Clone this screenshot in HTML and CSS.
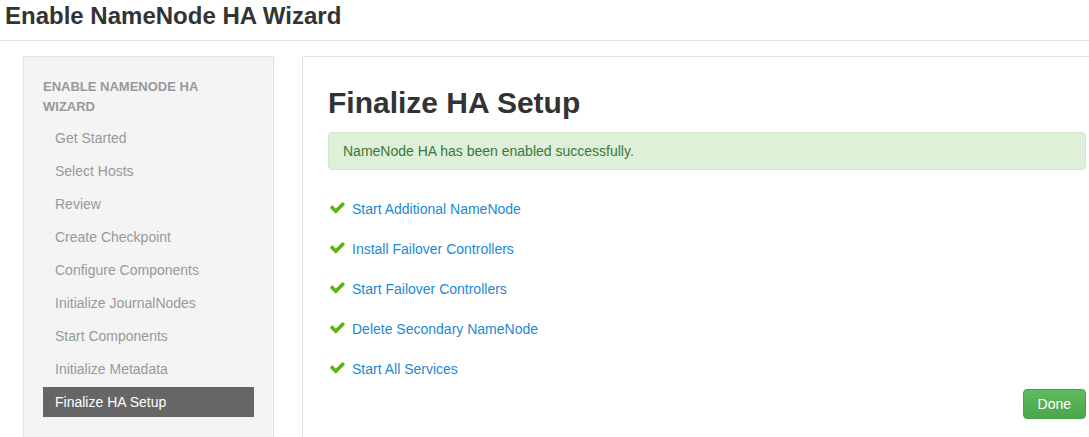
FILE: index.html
```html
<!DOCTYPE html>
<html>
<head>
<meta charset="utf-8">
<link rel="stylesheet" href="styles.css">
</head>
<body>
<header class="page-header">
  <h1 class="page-title">Enable NameNode HA Wizard</h1>
</header>
<div class="wizard">
  <aside class="well">
    <div class="nav-heading">ENABLE NAMENODE HA WIZARD</div>
    <ul class="steps">
      <li>Get Started</li>
      <li>Select Hosts</li>
      <li>Review</li>
      <li>Create Checkpoint</li>
      <li>Configure Components</li>
      <li>Initialize JournalNodes</li>
      <li>Start Components</li>
      <li>Initialize Metadata</li>
      <li class="active">Finalize HA Setup</li>
    </ul>
  </aside>
  <main class="content">
    <h2 class="content-title">Finalize HA Setup</h2>
    <div class="alert">NameNode HA has been enabled successfully.</div>
    <ul class="tasks">
      <li><svg class="check" viewBox="0 200 1792 1400"><path d="M1671 566q0 40-28 68l-724 724-136 136q-28 28-68 28t-68-28l-136-136-362-362q-28-28-28-68t28-68l136-136q28-28 68-28t68 28l294 295 656-657q28-28 68-28t68 28l136 136q28 28 28 68z"/></svg><a>Start Additional NameNode</a></li>
      <li><svg class="check" viewBox="0 200 1792 1400"><path d="M1671 566q0 40-28 68l-724 724-136 136q-28 28-68 28t-68-28l-136-136-362-362q-28-28-28-68t28-68l136-136q28-28 68-28t68 28l294 295 656-657q28-28 68-28t68 28l136 136q28 28 28 68z"/></svg><a>Install Failover Controllers</a></li>
      <li><svg class="check" viewBox="0 200 1792 1400"><path d="M1671 566q0 40-28 68l-724 724-136 136q-28 28-68 28t-68-28l-136-136-362-362q-28-28-28-68t28-68l136-136q28-28 68-28t68 28l294 295 656-657q28-28 68-28t68 28l136 136q28 28 28 68z"/></svg><a>Start Failover Controllers</a></li>
      <li><svg class="check" viewBox="0 200 1792 1400"><path d="M1671 566q0 40-28 68l-724 724-136 136q-28 28-68 28t-68-28l-136-136-362-362q-28-28-28-68t28-68l136-136q28-28 68-28t68 28l294 295 656-657q28-28 68-28t68 28l136 136q28 28 28 68z"/></svg><a>Delete Secondary NameNode</a></li>
      <li><svg class="check" viewBox="0 200 1792 1400"><path d="M1671 566q0 40-28 68l-724 724-136 136q-28 28-68 28t-68-28l-136-136-362-362q-28-28-28-68t28-68l136-136q28-28 68-28t68 28l294 295 656-657q28-28 68-28t68 28l136 136q28 28 28 68z"/></svg><a>Start All Services</a></li>
    </ul>
    <div class="actions"><button class="btn-success">Done</button></div>
  </main>
</div>
</body>
</html>
```
FILE: styles.css
```css
html, body {
  margin: 0;
  padding: 0;
  overflow: hidden;
  background: #fff;
  font-family: "Liberation Sans", Arial, sans-serif;
  font-size: 14px;
  color: #333;
}
.page-header {
  height: 39px;
  padding-top: 1px;
  padding-left: 5px;
  border-bottom: 1px solid #e5e5e5;
}
.page-title {
  margin: 0;
  font-size: 24px;
  line-height: 30px;
  font-weight: bold;
  color: #333;
}
.wizard {
  display: flex;
  align-items: flex-start;
  margin-top: 15px;
  margin-left: 23px;
  gap: 28px;
  width: 1090px;
}
.well {
  flex: 0 0 auto;
  width: 211px;
  padding: 20px 19px 40px;
  background: #f4f4f4;
  border: 1px solid #e3e3e3;
}
.nav-heading {
  max-width: 170px;
  font-size: 13px;
  font-weight: bold;
  line-height: 20px;
  color: #999;
  margin-bottom: 6px;
}
.steps {
  list-style: none;
  margin: 0;
  padding: 0;
  display: flex;
  flex-direction: column;
  gap: 3px;
}
.steps li {
  padding: 5px 12px;
  line-height: 20px;
  color: #999;
}
.steps li.active {
  background: #666;
  color: #fff;
}
.content {
  flex: 0 0 auto;
  width: 758px;
  padding: 10px 25px 40px;
  border: 1px solid #e3e3e3;
}
.content-title {
  margin: 19px 0 13px;
  font-size: 30px;
  line-height: 33px;
  font-weight: bold;
  color: #333;
}
.alert {
  padding: 8px 14px;
  line-height: 20px;
  background: #dff0d8;
  border: 1px solid #d0e9c6;
  border-radius: 4px;
  color: #3c763d;
}
.tasks {
  list-style: none;
  margin: 19px 0 0;
  padding: 0;
}
.tasks li {
  display: flex;
  align-items: center;
  height: 40px;
}
.check {
  width: 17px;
  height: 15px;
  margin-left: 1px;
  margin-right: 6px;
  margin-top: -4px;
  fill: #5fb012;
}
.tasks a {
  color: #1a8ad4;
  line-height: 20px;
}
.actions {
  display: flex;
  justify-content: flex-end;
  margin-top: 0;
}
.btn-success {
  font-family: "Liberation Sans", Arial, sans-serif;
  font-size: 14px;
  line-height: 20px;
  padding: 4px 14px;
  color: #fff;
  background: linear-gradient(#5fbb5f, #4ca64c);
  border: 1px solid #43a043;
  border-radius: 4px;
}
```
